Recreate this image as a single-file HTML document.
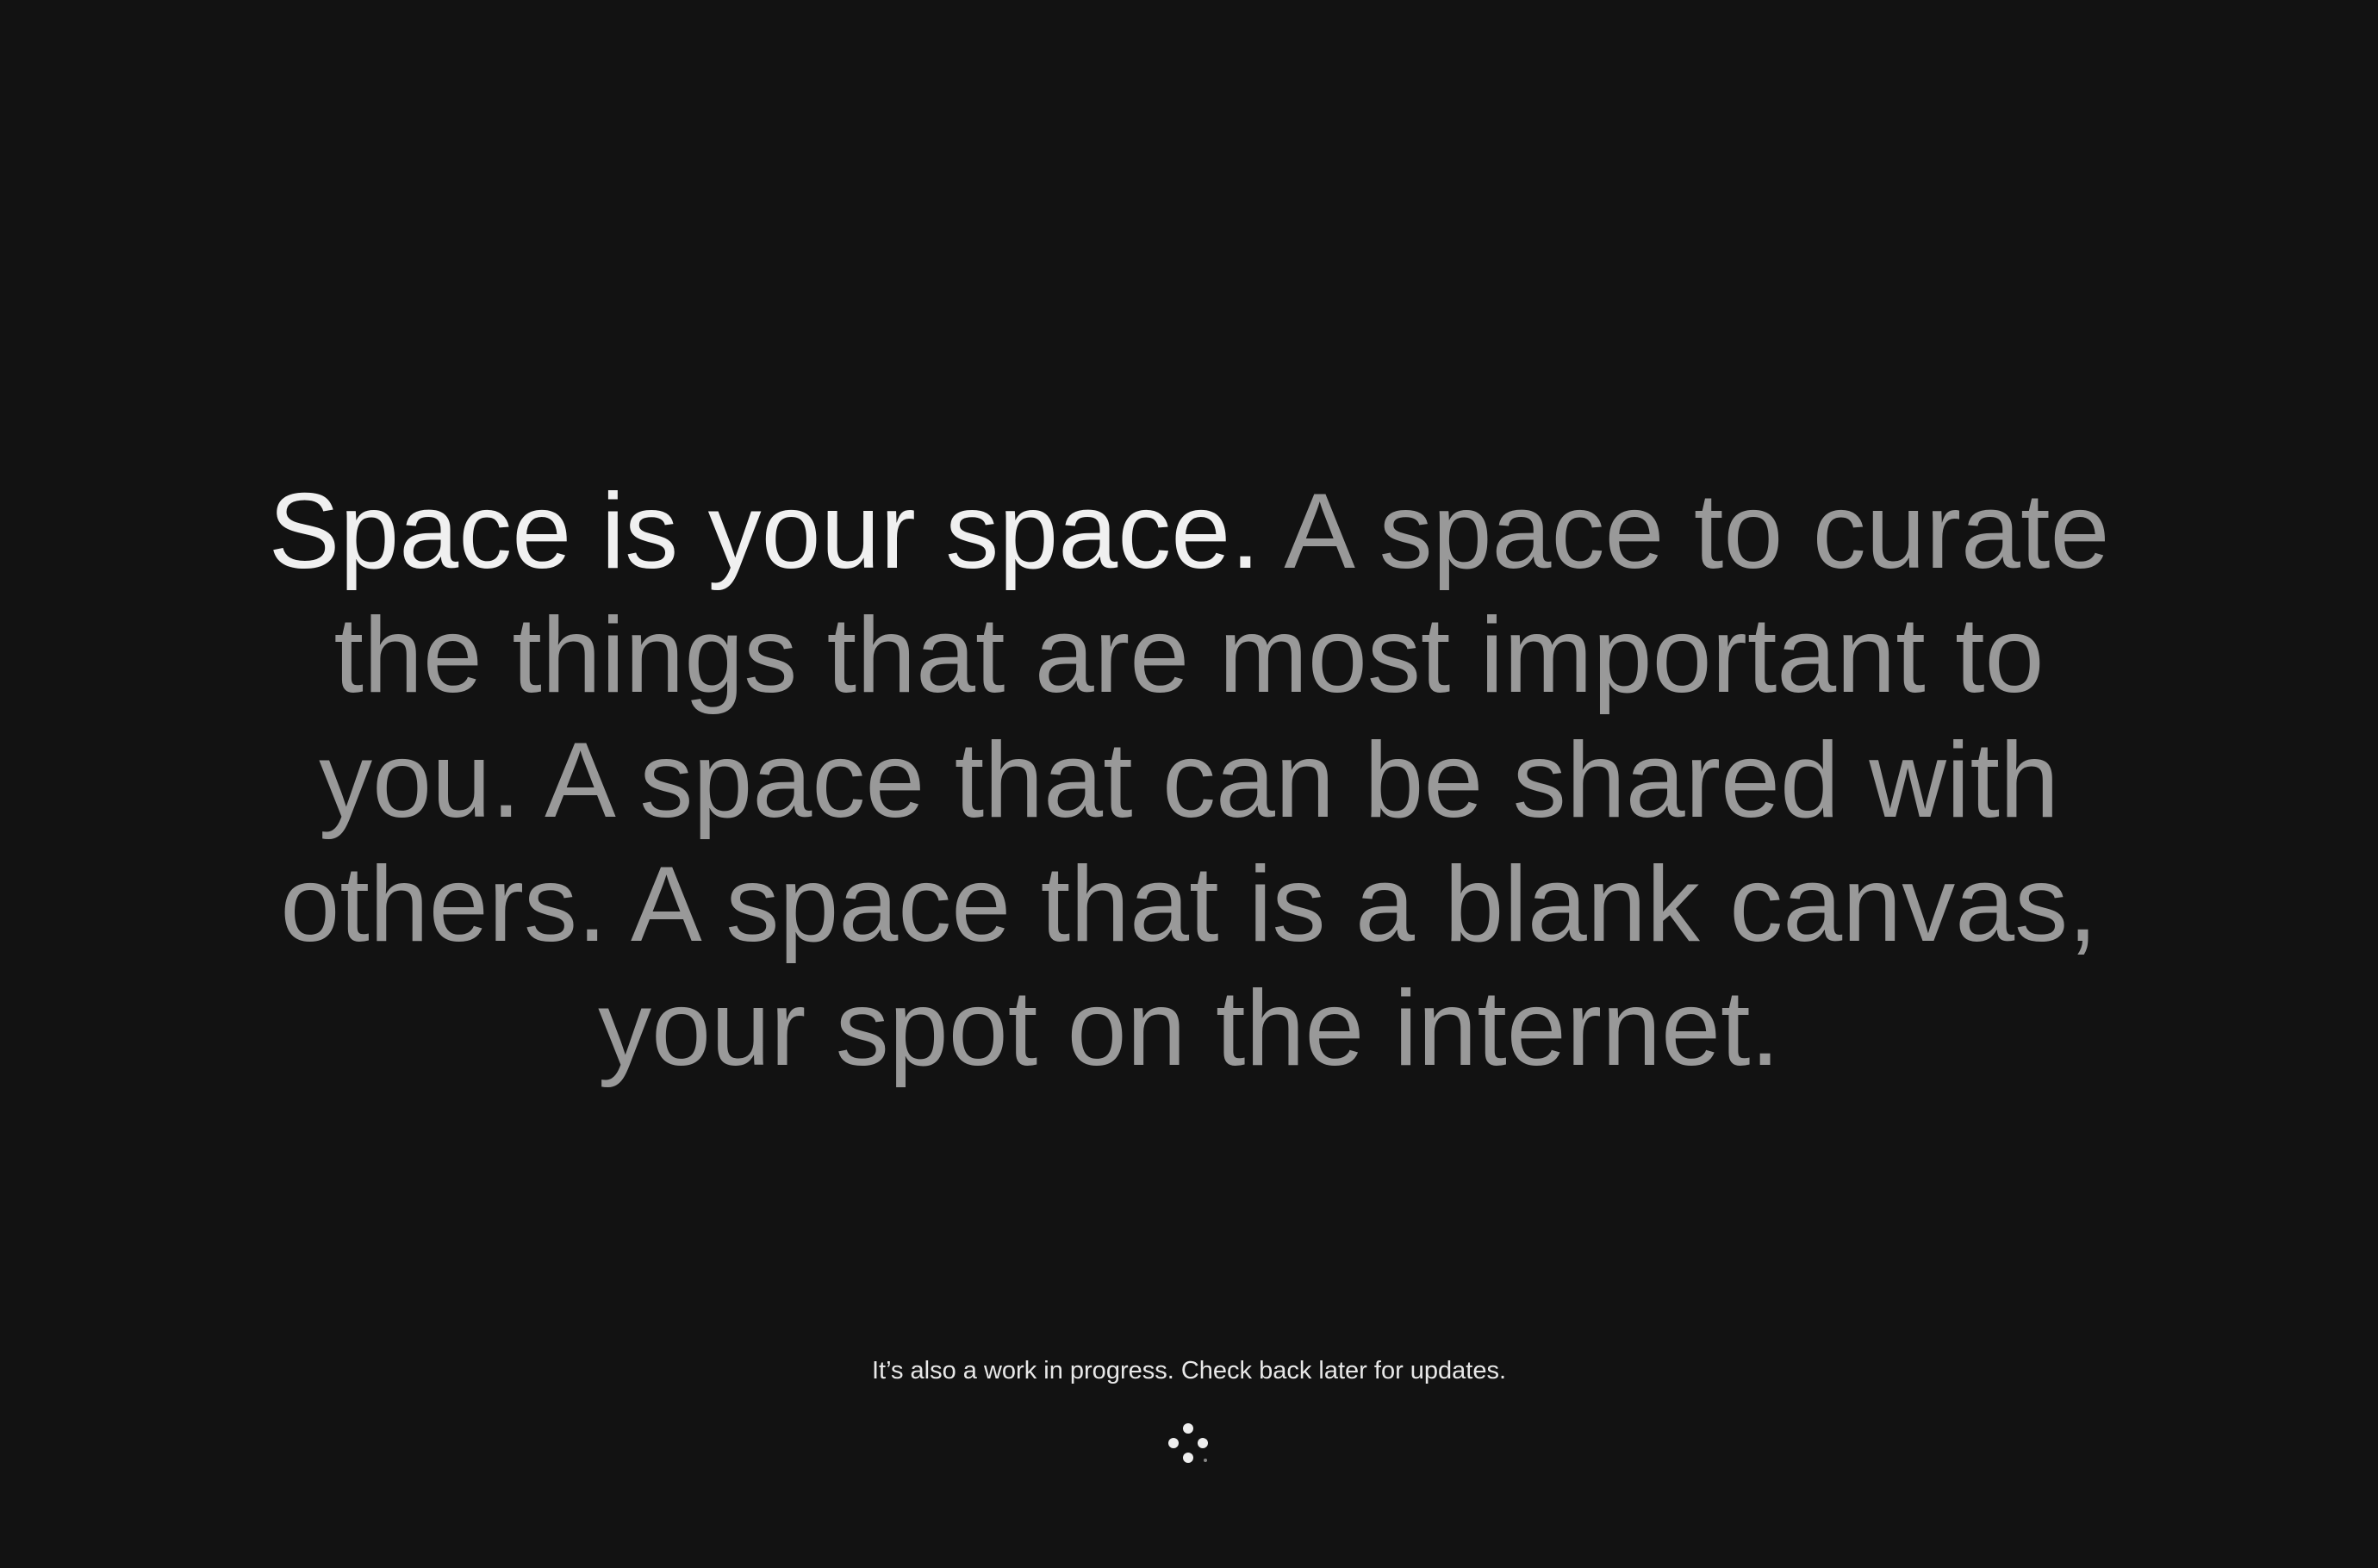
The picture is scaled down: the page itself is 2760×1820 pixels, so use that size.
<!DOCTYPE html>
<html><head><style>
html,body{margin:0;padding:0;background:#121212;width:2760px;height:1820px;overflow:hidden}
.t{position:absolute;left:0;width:2760px;text-align:center;font-family:"Liberation Sans",sans-serif;font-size:124px;letter-spacing:0px;color:#999;white-space:nowrap;line-height:1}
.w{color:#f0f0f0}
.s{position:absolute;left:0;width:2760px;text-align:center;top:1577px;font-family:"Liberation Sans",sans-serif;font-size:29px;color:#e8e8e8;line-height:1}
</style></head><body>
<div class="t" style="top:555px"><span class="w">Space is your space.</span> A space to curate</div>
<div class="t" style="top:699px">the things that are most important to</div>
<div class="t" style="top:844px">you. A space that can be shared with</div>
<div class="t" style="top:988px">others. A space that is a blank canvas,</div>
<div class="t" style="top:1132px">your spot on the internet.</div>
<div class="s">It’s also a work in progress. Check back later for updates.</div>
<svg style="position:absolute;left:0;top:0" width="2760" height="1820">
<g fill="#eee"><circle cx="1379" cy="1658" r="6"/><circle cx="1362" cy="1675" r="6"/><circle cx="1396" cy="1675" r="6"/><circle cx="1379" cy="1692" r="6"/></g>
<circle cx="1399" cy="1695" r="2" fill="#888"/>
</svg>
</body></html>
